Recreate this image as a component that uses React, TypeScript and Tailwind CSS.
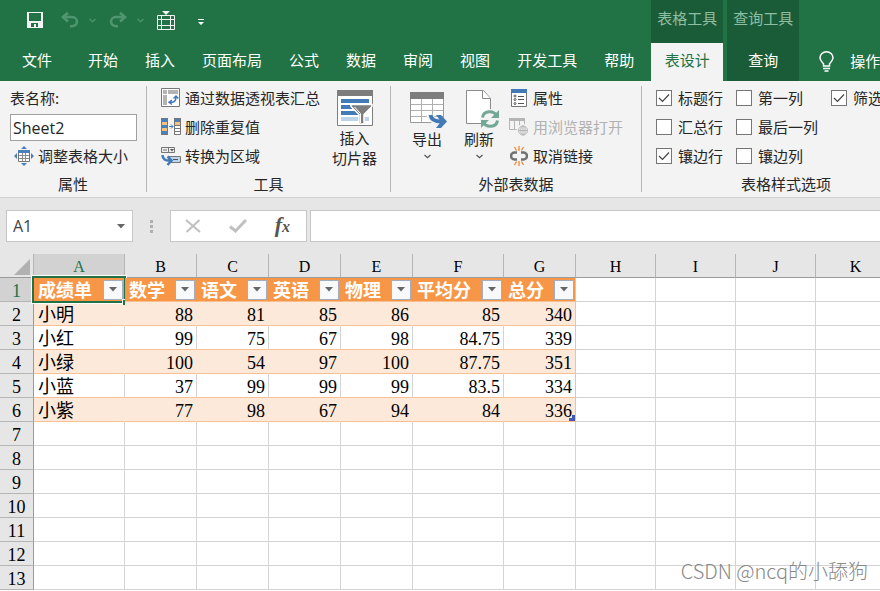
import React from "react";

const UI_FONT = "font-['Noto_Sans_CJK_SC',sans-serif]";
const CELL_FONT = "font-['Liberation_Serif','Noto_Sans_CJK_SC',serif]";

function SaveIcon() {
  return (
    <svg width="16" height="16" viewBox="0 0 16 16" aria-hidden="true">
      <path fill="#f4f4f4" fillRule="evenodd" d="M0 0h16v16H0zM2 1v8h12V1zM4 11v4h3v-3h2v3h2v-4z" />
    </svg>
  );
}

function UndoIcon({ flip = false }: { flip?: boolean }) {
  return (
    <svg width="18" height="16" viewBox="0 0 18 16" className={flip ? "-scale-x-100" : ""} aria-hidden="true" fill="none" stroke="#4f9670">
      <path d="M2 5h9a5 4.600 0 0 1 0 9.200H9" strokeWidth="2.600" />
      <path d="M7 .8L2 5l5 4.400" strokeWidth="2.600" />
    </svg>
  );
}

function Chevron({ color }: { color: string }) {
  return (
    <svg width="7" height="5" viewBox="0 0 7 5" fill="none" stroke={color} strokeWidth="1.200" aria-hidden="true">
      <path d="M.5 1l3 2.800 3-2.800" />
    </svg>
  );
}

function TableQuickIcon() {
  return (
    <svg width="18" height="19" viewBox="0 0 18 19" fill="none" stroke="#f4f4f4" aria-hidden="true">
      <path d="M5 0h8L9 4z" fill="#f4f4f4" stroke="none" />
      <path d="M.5 4.500h17v14H.5zM0 8.500h18M0 14.500h18M4.500 4v15M13.500 4v15" />
    </svg>
  );
}

function BulbIcon() {
  return (
    <svg width="15" height="21" viewBox="0 0 15 21" fill="none" stroke="#fff" strokeWidth="1.500" aria-hidden="true">
      <path d="M4.500 15v-2.200C3 11 1 9.500 1 6.800a6.500 6 0 0 1 13 0c0 2.700-2 4.200-3.500 6V15z" />
      <path d="M4 17.500h7M5.500 20h4" />
    </svg>
  );
}

function ResizeIcon() {
  return (
    <svg width="20" height="20" viewBox="0 0 20 20" aria-hidden="true">
      <path fill="#4a7fba" d="M10 0l3 3H7zM10 20l3-3H7zM0 10l3-3v6zM20 10l-3-3v6z" />
      <path fill="#fff" stroke="#767676" d="M4.500 4.500h11v11h-11z" />
      <path fill="#4a7fba" d="M4 4h12v3H4z" />
      <path stroke="#8b8b8b" d="M8.500 7v8M11.500 7v8M5 9.500h10M5 12.500h10" />
    </svg>
  );
}

function PivotIcon() {
  return (
    <svg width="20" height="20" viewBox="0 0 20 20" aria-hidden="true">
      <path fill="#fff" stroke="#767676" d="M.5.500h18v18H.5z" />
      <path fill="#b3b3b3" d="M2 2h4v4H2zM7 2h10v4H7zM2 7h4v10H2z" />
      <path stroke="#4279b7" strokeWidth="1.500" fill="none" d="M9 14c4 1 6-1 6-5M12.500 10.500L15 8l2.300 2.500M11 12l-3 2.200 3 2.300" />
    </svg>
  );
}

function DuplicatesIcon() {
  return (
    <svg width="20" height="18" viewBox="0 0 20 18" aria-hidden="true">
      <path fill="#4a7fba" d="M0 0h7v17H0zM13 0h7v5h-7z" />
      <path fill="#f2c27e" d="M1 4h5v3H1zM1 10h5v3H1zM14 4h5v3h-5z" />
      <path fill="#fff" d="M14 8h5v8h-5z" />
      <path fill="none" stroke="#767676" d="M.5.500h6v16h-6zM13.500.500h6v16h-6zM13 7.500h7M13 10.500h7M13 13.500h7" />
      <path fill="none" stroke="#4279b7" d="M8 8.500h4M10 6.500l2 2-2 2" />
    </svg>
  );
}

function ConvertIcon() {
  return (
    <svg width="20" height="20" viewBox="0 0 20 20" aria-hidden="true">
      <path fill="#eee" stroke="#767676" d="M.5 1.500h13v5H.5zM7.500 1v6" />
      <path stroke="#767676" d="M2 4h4" />
      <path fill="#555" d="M9 3h4l-2 2.500z" />
      <path fill="#bdd3ea" stroke="#767676" d="M7.500 10.500h12v6h-12z" />
      <path stroke="#555" d="M12 13.500h5" />
      <path fill="none" stroke="#f3f3f3" strokeWidth="5" d="M2 9c0 4 3 6 7 5.500" />
      <path fill="none" stroke="#4279b7" strokeWidth="2.500" d="M1.500 9c0 4 3 6 8 5.500M6.500 10.500l4 4-4 4.500" />
    </svg>
  );
}

function SlicerIcon() {
  return (
    <svg width="36" height="36" viewBox="0 0 36 36" aria-hidden="true">
      <path fill="#fff" stroke="#7d7d7d" d="M.5.500h35v35H.5z" />
      <path fill="#7d7d7d" d="M0 0h36v6H0z" />
      <path fill="#4279b7" d="M4 9h28v4H4zM4 15h28v4H4zM4 21h20v4H4z" />
      <path fill="#bdd3ea" d="M4 27h28v4H4z" />
      <path fill="#7d7d7d" stroke="#fff" strokeWidth="1.500" d="M14 14.500h21v2l-8 8V34h-5v-9.500l-8-8z" />
      <path stroke="#fff" d="M17.500 17l6 6.500V33" fill="none" />
    </svg>
  );
}

function ExportIcon() {
  return (
    <svg width="38" height="38" viewBox="0 0 38 38" className="ml-1" aria-hidden="true">
      <path fill="#fff" stroke="#999" d="M.5 2.500h33v30H.5z" />
      <path fill="#7d7d7d" d="M0 2h34v7H0z" />
      <path stroke="#b0b0b0" d="M1 14.500h32M1 20.500h32M1 26.500h32M11.500 9v23M22.500 9v23" />
      <path fill="none" stroke="#f3f3f3" strokeWidth="7" d="M20 25c1 6 6 7 14 6" />
      <path fill="none" stroke="#4279b7" strokeWidth="4" d="M20.500 25c1 6 6 7 13 6.500" />
      <path fill="#4279b7" d="M26 25h5l6 6.500-6 6.500h-5l5-6.500z" />
    </svg>
  );
}

function RefreshIcon() {
  return (
    <svg width="34" height="38" viewBox="0 0 34 38" className="ml-2" aria-hidden="true">
      <path fill="#fff" stroke="#8b8b8b" d="M.5.500h17l7 8v25H.5z" />
      <path fill="#fff" stroke="#8b8b8b" d="M16.500.500v8h8" />
      <circle cx="24" cy="29" r="10" fill="#f3f3f3" />
      <g fill="none" stroke="#74a896" strokeWidth="3">
        <path d="M16.500 27.500c1-7 11-8 15-1" />
        <path d="M31.500 30.500c-1 7-11 8-15 1" />
      </g>
      <path fill="#74a896" d="M33 20v8h-8zM15 38v-8h8z" />
    </svg>
  );
}

function PropertiesIcon() {
  return (
    <svg width="18" height="18" viewBox="0 0 18 18" aria-hidden="true">
      <path fill="#fff" stroke="#767676" d="M1.500.500h15v17h-15z" />
      <path fill="#4279b7" d="M1 0h16v4H1z" />
      <path stroke="#555" d="M8 7.500h6M8 10.500h6M8 14.500h6" />
      <g fill="none" stroke="#555"><circle cx="5" cy="7" r="1" /><circle cx="5" cy="10.500" r="1" /><circle cx="5" cy="14.500" r="1" /></g>
    </svg>
  );
}

function BrowserIcon() {
  return (
    <svg width="20" height="18" viewBox="0 0 20 18" fill="none" stroke="#b5b5b5" aria-hidden="true">
      <path d="M.5.500h15v11H.5zM5.500 3v8M10.500 3v8" />
      <path d="M0 1.500h16" strokeWidth="3" />
      <circle cx="14" cy="12.500" r="6" fill="#f3f3f3" stroke="#f3f3f3" />
      <circle cx="14" cy="12.500" r="4.500" />
      <path d="M14 8v9M9.500 12.500h9" /><ellipse cx="14" cy="12.500" rx="2.200" ry="4.500" />
    </svg>
  );
}

function UnlinkIcon() {
  return (
    <svg width="18" height="20" viewBox="0 0 18 20" fill="none" aria-hidden="true">
      <path stroke="#707070" strokeWidth="2.500" d="M7 6.500H4.500a3.500 3.500 0 0 0 0 7H7M11 6.500h2.500a3.500 3.500 0 0 1 0 7H11" />
      <path stroke="#ed8733" strokeWidth="1.300" d="M9 0v5M4.500 1l2 3.500M13.500 1l-2 3.500M9 20v-5M4.500 19l2-3.500M13.500 19l-2-3.500" />
    </svg>
  );
}

const tabs = ["开始", "插入", "页面布局", "公式", "数据", "审阅", "视图", "开发工具", "帮助"];

function Header() {
  return (
    <header className="flex h-[81px] overflow-hidden bg-[#217346] text-[15px] whitespace-nowrap text-white">
      <div className="flex shrink-0 flex-col">
        <div className="flex h-[43px] items-center pb-[3px] pl-[27px]">
          <button aria-label="保存"><SaveIcon /></button>
          <button aria-label="撤消" className="ml-[18px] flex items-center gap-[10px]"><UndoIcon /><Chevron color="#4f9670" /></button>
          <button aria-label="恢复" className="ml-[13px] flex items-center gap-[10px]"><UndoIcon flip /><Chevron color="#4f9670" /></button>
          <button aria-label="表格" className="ml-[13px]"><TableQuickIcon /></button>
          <button aria-label="自定义快速访问工具栏" className="ml-[23px] pt-1">
            <svg width="6" height="6" viewBox="0 0 6 6" fill="#fff" aria-hidden="true"><path d="M0 0h6v1H0zM0 3h6L3 6z" /></svg>
          </button>
        </div>
        <nav className="flex h-[38px] items-center gap-[27px] pr-[17px] pb-1 pl-[22px] leading-5">
          <button className="mr-[9px]">文件</button>
          {tabs.map((t) => <button key={t}>{t}</button>)}
        </nav>
      </div>
      <div className="flex w-[72px] shrink-0 flex-col bg-[#1b5c38] text-center leading-5">
        <span className="h-[43px] pt-2 text-[#8fbfa3]">表格工具</span>
        <button className="h-[38px] bg-[#f3f3f3] pb-1 text-[#217346]">表设计</button>
      </div>
      <div className="ml-1 flex w-[72px] shrink-0 flex-col bg-[#1b5c38] text-center leading-5">
        <span className="h-[43px] pt-2 text-[#8fbfa3]">查询工具</span>
        <button className="h-[38px] pb-1">查询</button>
      </div>
      <button className="ml-5 flex h-[38px] shrink-0 items-center gap-4 self-end pb-[2px]">
        <BulbIcon />操作
      </button>
    </header>
  );
}

function Group({ title, className, children }: { title: string; className: string; children: React.ReactNode }) {
  return (
    <section className={`flex shrink-0 flex-col ${className}`}>
      <div className="flex h-[88px]">{children}</div>
      <h2 className="text-center leading-7">{title}</h2>
    </section>
  );
}

function Divider() {
  return <div className="mt-[3px] h-[106px] w-px shrink-0 bg-[#b5b5b5]" />;
}

function Tool({ icon, label, disabled = false }: { icon: React.ReactNode; label: string; disabled?: boolean }) {
  return (
    <button disabled={disabled} className="flex h-[29px] items-center gap-1 disabled:text-[#b1b1b1]">
      <span className="flex w-5 justify-center">{icon}</span>
      {label}
    </button>
  );
}

function Check({ label, checked = false }: { label: string; checked?: boolean }) {
  return (
    <label className="flex h-[29px] items-center gap-[6px]">
      <span className="grid size-4">
        <input type="checkbox" defaultChecked={checked} className="peer col-start-1 row-start-1 size-4 appearance-none border border-[#767676] bg-white" />
        <svg viewBox="0 0 16 16" className="pointer-events-none col-start-1 row-start-1 hidden size-4 peer-checked:block" fill="none" stroke="#444" strokeWidth="1.200" aria-hidden="true">
          <path d="M3 8l3.500 3.500L13 4.500" />
        </svg>
      </span>
      {label}
    </label>
  );
}

function Ribbon() {
  return (
    <div className="flex h-[117px] overflow-hidden border-b border-[#d0d0d0] bg-[#f3f3f3] pt-[2px] text-[15px] leading-[18px] whitespace-nowrap text-[#262626]">
      <Group title="属性" className="w-[146px]">
        <div className="flex flex-col pl-[10px]">
          <label htmlFor="table-name" className="leading-[29px]">表名称:</label>
          <input id="table-name" defaultValue="Sheet2" className="mt-[2px] h-[27px] w-[127px] border border-[#a0a0a0] bg-white px-[2px] font-['Open_Sans',sans-serif] text-base" />
          <div className="pl-1"><Tool icon={<ResizeIcon />} label="调整表格大小" /></div>
        </div>
      </Group>
      <Divider />
      <Group title="工具" className="w-[243px]">
        <div className="flex flex-col pl-[14px]">
          <Tool icon={<PivotIcon />} label="通过数据透视表汇总" />
          <Tool icon={<DuplicatesIcon />} label="删除重复值" />
          <Tool icon={<ConvertIcon />} label="转换为区域" />
        </div>
        <button className="ml-3 flex flex-col items-center pt-[7px] leading-5">
          <SlicerIcon />
          <span className="mt-[2px]">插入</span>
          <span>切片器</span>
        </button>
      </Group>
      <Divider />
      <Group title="外部表数据" className="w-[250px]">
        <button className="ml-[10px] flex w-[52px] flex-col items-center pt-[7px]">
          <ExportIcon />
          <span className="mt-[2px] mb-[6px]">导出</span>
          <Chevron color="#555" />
        </button>
        <button className="flex w-[52px] flex-col items-center pt-[7px]">
          <RefreshIcon />
          <span className="mt-[2px] mb-[6px]">刷新</span>
          <Chevron color="#555" />
        </button>
        <div className="ml-1 flex flex-col">
          <Tool icon={<PropertiesIcon />} label="属性" />
          <Tool icon={<BrowserIcon />} label="用浏览器打开" disabled />
          <Tool icon={<UnlinkIcon />} label="取消链接" />
        </div>
      </Group>
      <Divider />
      <Group title="表格样式选项" className="w-[288px]">
        <div className="w-[94px] pl-[14px]">
          <Check label="标题行" checked />
          <Check label="汇总行" />
          <Check label="镶边行" checked />
        </div>
        <div className="w-[95px]">
          <Check label="第一列" />
          <Check label="最后一列" />
          <Check label="镶边列" />
        </div>
        <div>
          <Check label="筛选" checked />
        </div>
      </Group>
    </div>
  );
}

function DownArrow() {
  return <svg width="8" height="5" viewBox="0 0 8 5" fill="#666" aria-hidden="true"><path d="M0 0h8L4 4.500z" /></svg>;
}

function FormulaBar() {
  return (
    <div className="flex h-14 items-start overflow-hidden bg-[#e6e6e6] pt-3 pl-[6px]">
      <div className="flex h-8 w-[127px] shrink-0 items-center border border-[#c6c6c6] bg-white pr-[7px]">
        <input aria-label="名称框" defaultValue="A1" className="w-full min-w-0 px-[6px] font-['Open_Sans',sans-serif] text-base text-[#444]" />
        <button aria-label="展开名称框"><DownArrow /></button>
      </div>
      <div className="ml-[17px] flex h-8 w-[3px] shrink-0 flex-col justify-center gap-[2px]">
        <i className="size-[3px] bg-[#b0b0b0]" /><i className="size-[3px] bg-[#b0b0b0]" /><i className="size-[3px] bg-[#b0b0b0]" />
      </div>
      <div className="ml-[17px] flex h-8 w-[137px] shrink-0 items-center justify-between border border-[#c6c6c6] bg-white pr-4 pl-[14px]">
        <button aria-label="取消">
          <svg width="16" height="14" viewBox="0 0 16 14" fill="none" stroke="#c0c0c0" strokeWidth="2" aria-hidden="true"><path d="M1 1l14 12M14.500 1L1.500 13" /></svg>
        </button>
        <button aria-label="输入">
          <svg width="18" height="14" viewBox="0 0 18 14" fill="none" stroke="#c0c0c0" strokeWidth="3" aria-hidden="true"><path d="M1 7.500l5.500 4.500L17 1" /></svg>
        </button>
        <button aria-label="插入函数" className="flex items-baseline font-['Liberation_Serif',serif] text-[#555] italic">
          <span className="text-[22px] leading-6 font-bold">f</span><span className="text-base leading-6 font-bold">x</span>
        </button>
      </div>
      <input aria-label="编辑栏" className="ml-[3px] h-8 min-w-0 flex-1 border border-r-0 border-[#c6c6c6] bg-white px-2" />
    </div>
  );
}

const columns = ["A", "B", "C", "D", "E", "F", "G", "H", "I", "J", "K"];
const headings = ["成绩单", "数学", "语文", "英语", "物理", "平均分", "总分"];
const records: (string | number)[][] = [
  ["小明", 88, 81, 85, 86, 85, 340],
  ["小红", 99, 75, 67, 98, 84.75, 339],
  ["小绿", 100, 54, 97, 100, 87.75, 351],
  ["小蓝", 37, 99, 99, 99, 83.5, 334],
  ["小紫", 77, 98, 67, 94, 84, 336],
];

function cellStyle(row: number, col: number) {
  const inTable = row <= 6 && col < 7;
  if (!inTable) return "border-[#d4d4d4]";
  const right = col === 6 ? "border-r-[#fabf8f]" : "";
  if (row === 1) return `bg-[#f79646] border-b-[#fabf8f] ${right || "border-r-[#f79646]"}`;
  if (row % 2 === 0) return `bg-[#fde9d9] border-b-[#fabf8f] ${right || "border-r-[#fde9d9]"}`;
  return `border-b-[#fabf8f] ${right || "border-r-[#d4d4d4]"}`;
}

function Sheet() {
  return (
    <div className="overflow-hidden">
      <table className={`w-[896px] table-fixed border-separate border-spacing-0 text-lg leading-5 text-black ${CELL_FONT}`}>
        <colgroup>
          <col className="w-[34px]" />
          {columns.map((c) => (
            <col key={c} className={c === "A" || c === "F" ? "w-[91px]" : c < "H" ? "w-[72px]" : "w-[80px]"} />
          ))}
        </colgroup>
        <thead>
          <tr className="h-6 bg-[#e6e6e6] text-base leading-5">
            <th className="border-r border-b border-r-[#b5b5b5] border-b-[#9b9b9b] p-0">
              <svg width="16" height="16" viewBox="0 0 16 16" className="ml-auto mr-[3px] mt-[2px]" fill="#b1b1b1" aria-hidden="true"><path d="M16 0v16H0z" /></svg>
            </th>
            {columns.map((c) => (
              <th key={c} scope="col" className={`border-r border-b border-r-[#b5b5b5] border-b-[#9b9b9b] p-0 pt-[3px] font-normal ${c === "A" ? "bg-[#d2d2d2] text-[#217346]" : ""}`}>{c}</th>
            ))}
          </tr>
        </thead>
        <tbody>
          {Array.from({ length: 13 }, (_, i) => i + 1).map((row) => (
            <tr key={row} className="h-6">
              <th scope="row" className={`border-r border-b border-r-[#9b9b9b] border-b-[#b5b5b5] p-0 pt-[3px] font-normal ${row === 1 ? "bg-[#d2d2d2] text-[#217346]" : "bg-[#e6e6e6]"}`}>{row}</th>
              {columns.map((c, col) => {
                const base = `border-r border-b p-0 ${cellStyle(row, col)}`;
                if (row === 1 && col < 7) {
                  return (
                    <td key={c} className={`relative ${base}`}>
                      <div className="flex h-[23px] items-center justify-between pr-px pl-1 font-bold whitespace-nowrap text-white">
                        <span className="pt-[3px]">{headings[col]}</span>
                        <button aria-label={`筛选 ${headings[col]}`} className="grid size-5 shrink-0 place-items-center border border-[#a3adbd] bg-[#f8f9fb]"><DownArrow /></button>
                      </div>
                      {col === 0 && (
                        <div className="pointer-events-none absolute -inset-[2px] border-2 border-[#217346] ring-1 ring-white">
                          <div className="absolute -right-[4px] -bottom-[4px] size-[6px] border-t border-l border-white bg-[#217346]" />
                        </div>
                      )}
                    </td>
                  );
                }
                const value = records[row - 2]?.[col];
                return (
                  <td key={c} className={`${base} pt-[3px] ${col === 0 ? "pl-1" : "relative pr-[3px] text-right"}`}>
                    {value}
                    {row === 6 && col === 6 && (
                      <svg width="6" height="6" viewBox="0 0 6 6" className="absolute right-0 bottom-0" fill="#4458b0" aria-hidden="true"><path d="M3 0h3v6H0V3h3z" /></svg>
                    )}
                  </td>
                );
              })}
            </tr>
          ))}
        </tbody>
      </table>
    </div>
  );
}

export default function App() {
  return (
    <main className={`relative min-h-screen overflow-hidden bg-white ${UI_FONT}`}>
      <Header />
      <Ribbon />
      <FormulaBar />
      <Sheet />
      <p className="pointer-events-none absolute right-3 bottom-[6px] text-xl leading-7 font-light text-[#888]">CSDN @ncq的小舔狗</p>
    </main>
  );
}
